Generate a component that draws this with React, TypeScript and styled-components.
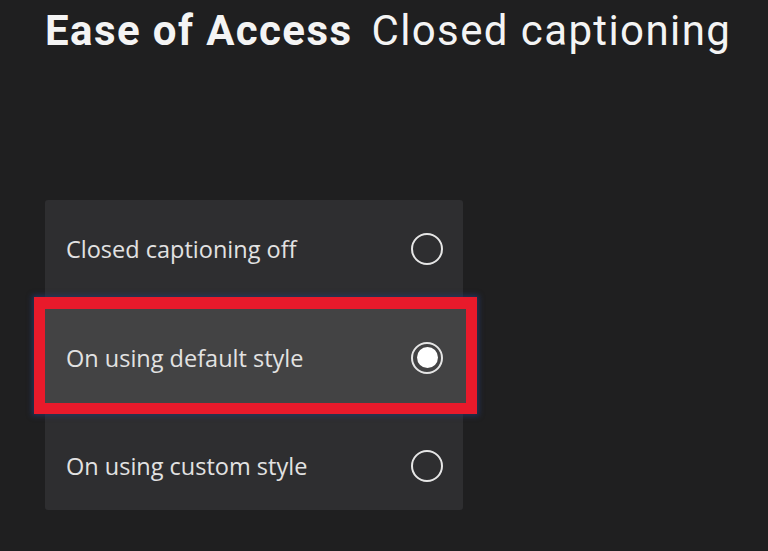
import React from "react";
import styled, { createGlobalStyle } from "styled-components";

const Global = createGlobalStyle`
  html, body { margin: 0; padding: 0; background: #1f1f1f; }
  body { width: 768px; height: 551px; overflow: hidden; }
`;

const Screen = styled.div`
  width: 768px;
  height: 551px;
  background: #1f1f20;
  box-sizing: border-box;
  padding: 6px 0 0 45px;
  display: flex;
  flex-direction: column;
`;

const Header = styled.h1`
  margin: 0;
  display: flex;
  gap: 19px;
  font-family: Roboto, "Noto Sans", sans-serif;
  font-size: 42px;
  line-height: 50px;
  letter-spacing: 1.4px;
  color: #f4f4f4;
  white-space: nowrap;
`;

const HeaderStrong = styled.span`
  font-weight: 700;
`;

const HeaderLight = styled.span`
  font-weight: 400;
`;

const Panel = styled.div`
  margin-top: 144px;
  width: 418px;
  display: flex;
  flex-direction: column;
  background: #2e2e30;
  border-radius: 3px;
`;

const Row = styled.div<{ $h: number; $pt?: number }>`
  height: ${(p) => p.$h}px;
  box-sizing: border-box;
  padding: ${(p) => p.$pt ?? 0}px 20px 0 21px;
  display: flex;
  align-items: center;
  justify-content: space-between;
`;

const SelectedRow = styled.div`
  margin: 0 -14px 0 -11px;
  height: 117px;
  box-sizing: border-box;
  border: 11px solid #e81a2b;
  border-top-width: 12px;
  background: #434344;
  box-shadow: 0 0 5px 2px rgba(35, 55, 105, 0.75);
  padding: 3px 23px 0 21px;
  display: flex;
  align-items: center;
  justify-content: space-between;
  position: relative;
  z-index: 1;
`;

const Label = styled.span`
  font-family: "Open Sans", "Noto Sans", sans-serif;
  font-size: 23.5px;
  color: #e2e2e2;
`;

const Radio = styled.span<{ $on?: boolean }>`
  width: 32px;
  height: 32px;
  box-sizing: border-box;
  border-radius: 50%;
  border: 2px solid #e6e6e6;
  display: flex;
  align-items: center;
  justify-content: center;
  &::after {
    content: "";
    display: ${(p) => (p.$on ? "block" : "none")};
    width: 21px;
    height: 21px;
    border-radius: 50%;
    background: #ffffff;
  }
`;

export default function App() {
  return (
    <>
      <Global />
      <Screen>
        <Header>
          <HeaderStrong>Ease of Access</HeaderStrong>
          <HeaderLight>Closed captioning</HeaderLight>
        </Header>
        <Panel>
          <Row $h={97}>
            <Label>Closed captioning off</Label>
            <Radio />
          </Row>
          <SelectedRow>
            <Label>On using default style</Label>
            <Radio $on />
          </SelectedRow>
          <Row $h={96} $pt={8}>
            <Label>On using custom style</Label>
            <Radio />
          </Row>
        </Panel>
      </Screen>
    </>
  );
}
